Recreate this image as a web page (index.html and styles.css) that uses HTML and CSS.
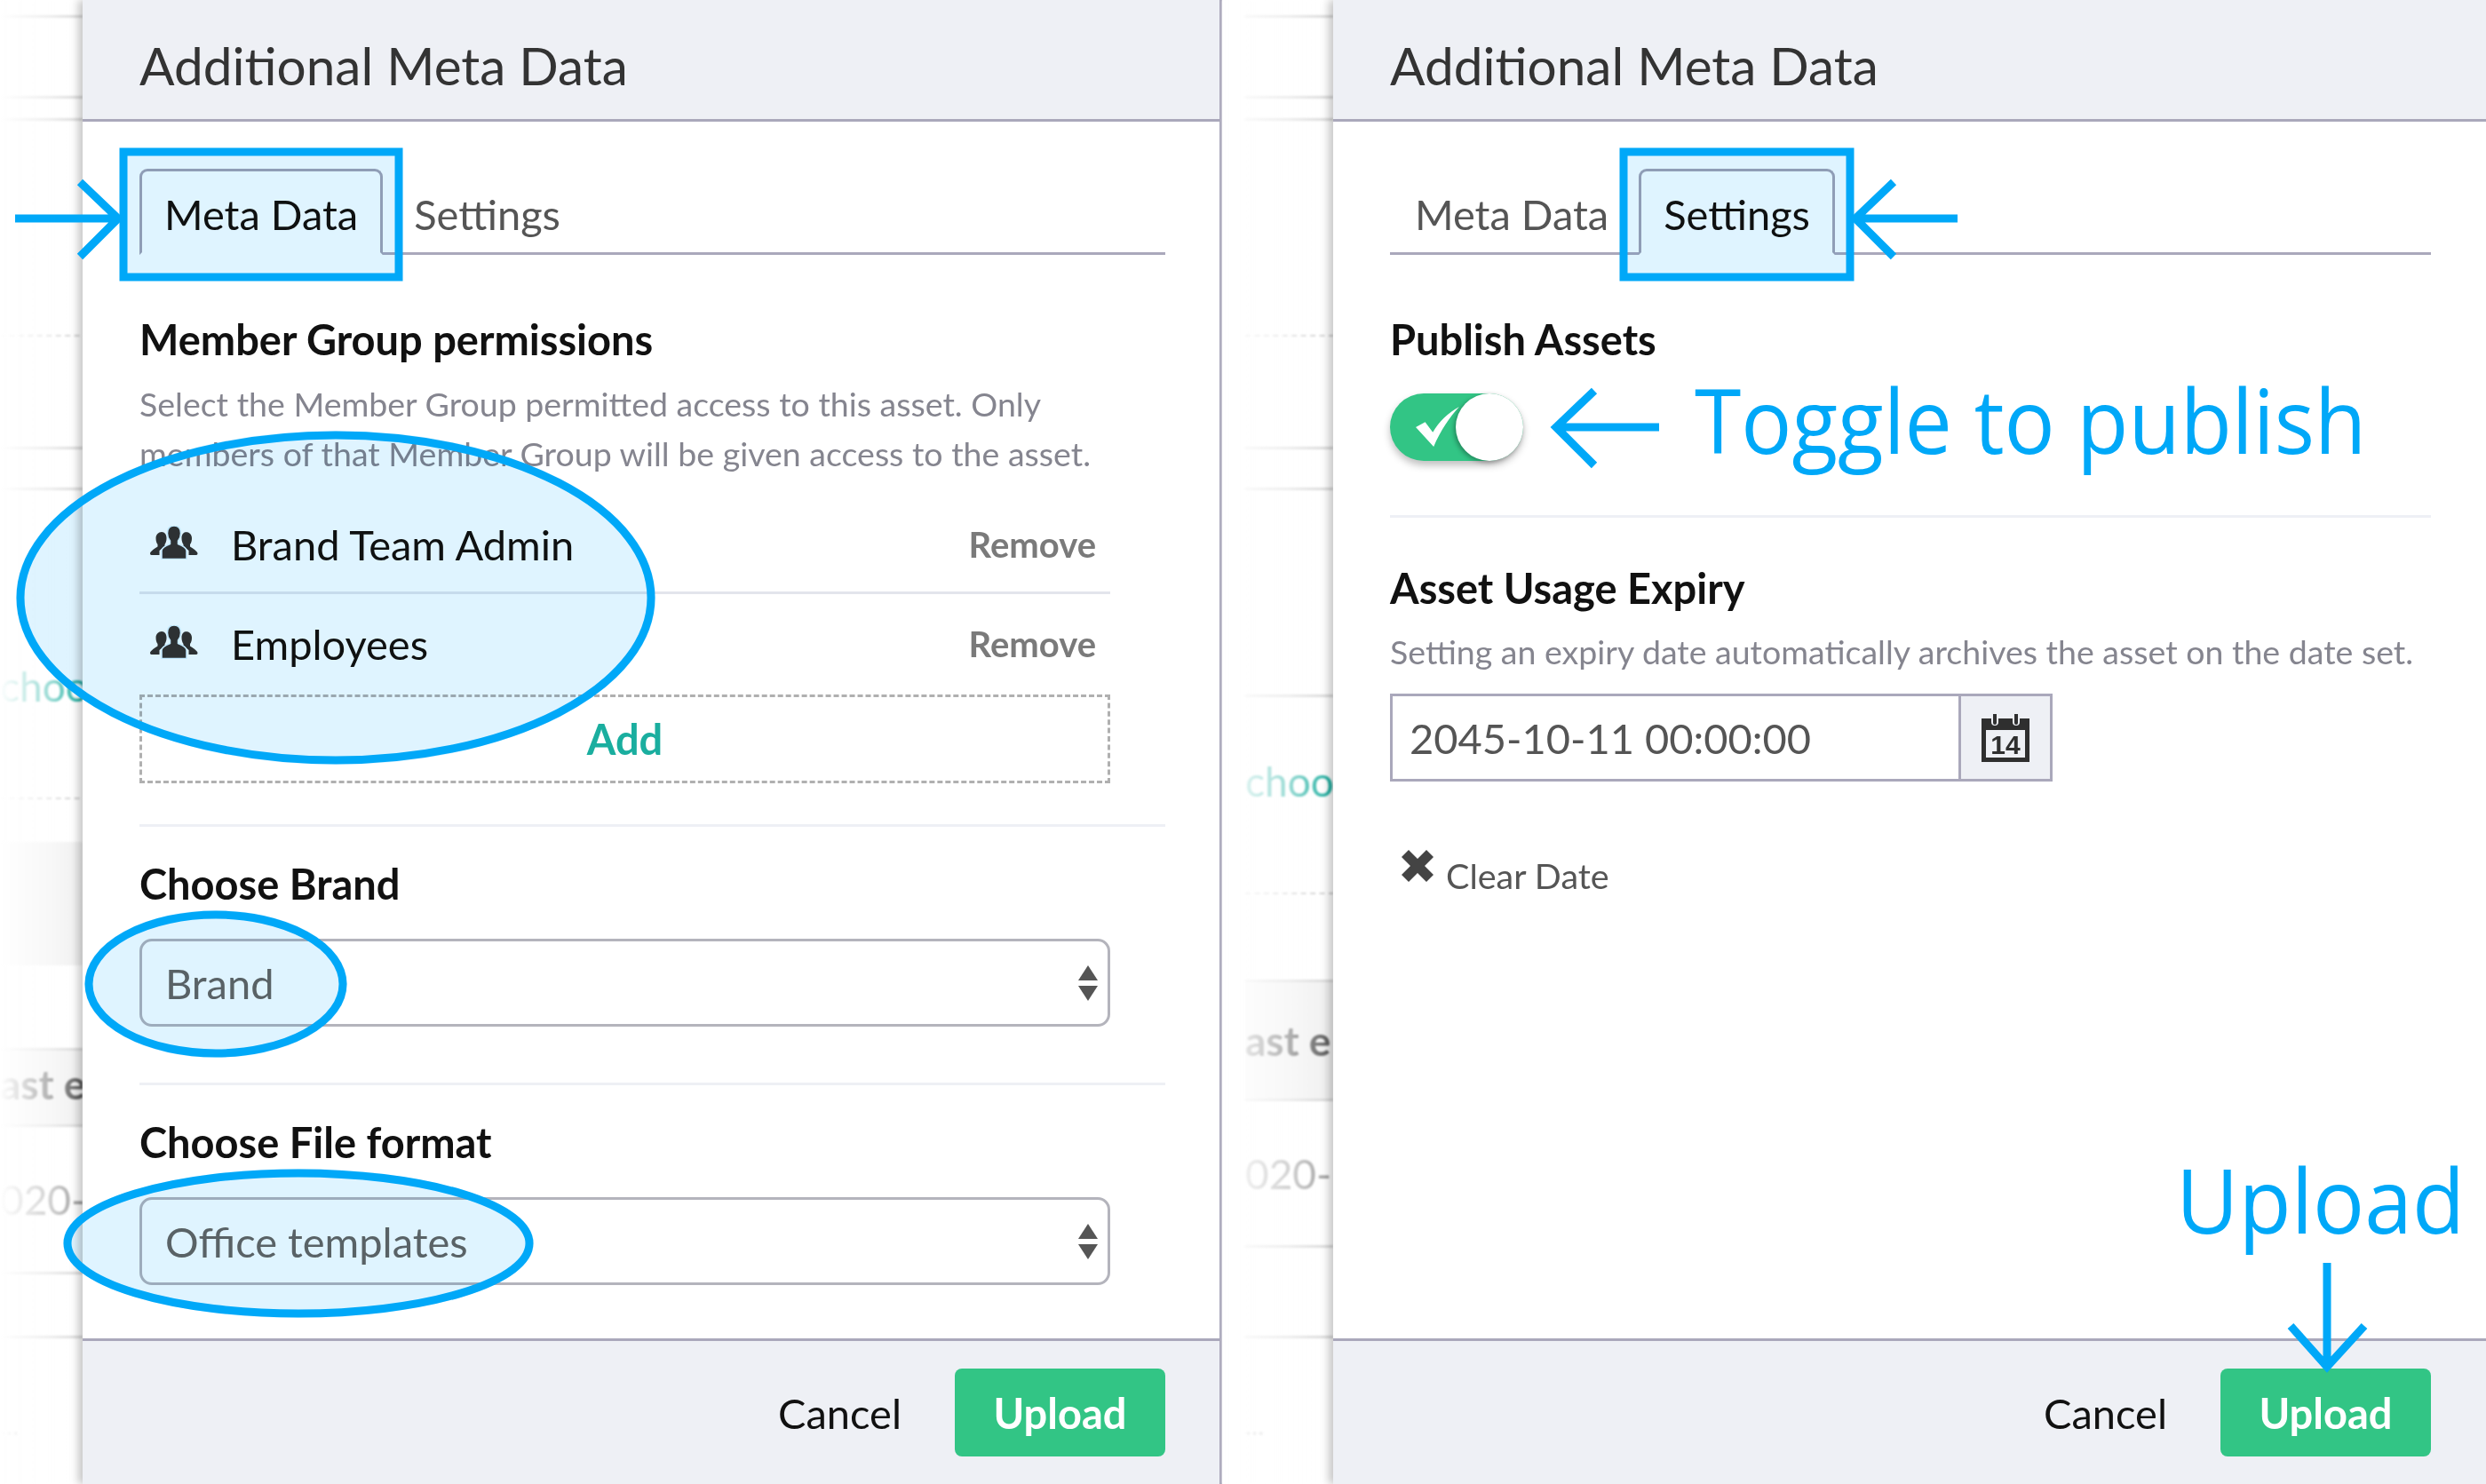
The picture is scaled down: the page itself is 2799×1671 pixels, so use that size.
FILE: index.html
```html
<!DOCTYPE html>
<html lang="en">
<head>
    <meta charset="UTF-8">
    <title>Additional Meta Data</title>
    <link rel="stylesheet" href="styles.css">
</head>
<body>
    <svg width="0" height="0" class="defs">
        <symbol id="people" viewBox="0 0 54 38">
            <path id="people-side" d="M13 7c3.500 0 5.500 3 5.500 7 0 3-.8 5.500-2 7v2l-6 5v5H1.500C.5 33 0 32 0 31c0-2 6-6 8.500-7.500V21c-1.300-1.500-2-4-2-7 0-4 3-7 6.500-7z"/>
            <path d="M41 7c-3.500 0-5.500 3-5.500 7 0 3 .8 5.500 2 7v2l6 5v5h8.500c1 0 1.500-1 1.500-2 0-2-6-6-8.500-7.500V21c1.300-1.500 2-4 2-7 0-4-3-7-6.500-7z"/>
            <path class="people-mid" d="M27 0c5 0 7.500 3.500 7.500 8.500 0 3.500-1.200 6.500-3 8.500v3.500c5 2 9.500 4.500 9.500 7.500v9.500H13V28c0-3 4.500-5.500 9.500-7.500V17c-1.800-2-3-5-3-8.500C19.500 3.500 22 0 27 0z"/>
        </symbol>
    </svg>

    <div class="page">
        <!-- left screen: meta data tab -->
        <section class="screen screen-left">
            <div class="ghost ghost-left">
                <div class="g-line"></div>
                <div class="g-line"></div>
                <div class="g-line"></div>
                <div class="g-dash"></div>
                <div class="g-line"></div>
                <div class="g-line"></div>
                <div></div>
                <div class="g-text g-teal">choo</div>
                <div class="g-dash"></div>
                <div></div>
                <div class="g-block"></div>
                <div class="g-line"></div>
                <div class="g-text g-line g-shade"><b>ast e</b></div>
                <div class="g-text g-line">020-</div>
                <div class="g-line"></div>
                <div class="g-text g-dots">...</div>
            </div>
            <div class="panel panel-left">
                <header class="panel-head">Additional Meta Data</header>
                <div class="panel-body">
                    <nav class="tabs">
                        <span class="tab active">Meta Data</span>
                        <span class="tab">Settings</span>
                    </nav>

                    <h3 class="first">Member Group permissions</h3>
                    <p class="hint hint-two">Select the Member Group permitted access to this asset. Only<br>members of that Member Group will be given access to the asset.</p>

                    <ul class="members">
                        <li><svg class="people"><use href="#people"></use></svg><span class="member-name">Brand Team Admin</span><span class="remove">Remove</span></li>
                        <li><svg class="people"><use href="#people"></use></svg><span class="member-name">Employees</span><span class="remove">Remove</span></li>
                    </ul>
                    <div class="add-box">Add</div>

                    <hr class="rule rule-brand">
                    <h3>Choose Brand</h3>
                    <div class="select">
                        <span>Brand</span>
                        <span class="carets"><i class="up"></i><i class="down"></i></span>
                    </div>

                    <hr class="rule rule-format">
                    <h3>Choose File format</h3>
                    <div class="select">
                        <span>Office templates</span>
                        <span class="carets"><i class="up"></i><i class="down"></i></span>
                    </div>
                </div>
                <footer class="panel-foot">
                    <span class="cancel">Cancel</span>
                    <span class="btn-upload">Upload</span>
                </footer>
            </div>
        </section>

        <!-- right screen: settings tab -->
        <section class="screen screen-right">
            <div class="ghost ghost-right">
                <div class="g-line"></div>
                <div class="g-line"></div>
                <div class="g-line"></div>
                <div class="g-dash"></div>
                <div class="g-line"></div>
                <div class="g-line"></div>
                <div class="g-line"></div>
                <div class="g-text g-teal">choo</div>
                <div class="g-dash"></div>
                <div class="g-line"></div>
                <div class="g-text g-line g-shade"><b>ast e</b></div>
                <div class="g-text g-line">020-</div>
                <div class="g-line"></div>
                <div class="g-text g-dots">...</div>
            </div>
            <div class="panel">
                <header class="panel-head">Additional Meta Data</header>
                <div class="panel-body">
                    <nav class="tabs">
                        <span class="tab">Meta Data</span>
                        <span class="tab active">Settings</span>
                    </nav>

                    <h3 class="first">Publish Assets</h3>
                    <div class="toggle">
                        <svg class="tick" viewBox="0 0 54 48"><path d="M2 24l11-6 9 12C29 18 40 7 53 0 42 12 31 28 23 47z"/></svg>
                        <span class="knob"></span>
                    </div>
                    <hr class="rule rule-publish">

                    <h3>Asset Usage Expiry</h3>
                    <p class="hint hint-one">Setting an expiry date automatically archives the asset on the date set.</p>
                    <div class="date-field">
                        <span class="date-value">2045-10-11 00:00:00</span>
                        <span class="date-btn">
                            <svg class="calendar" viewBox="0 0 54 54">
                                <path d="M0 5h11v4a4 4 0 0 0 8 0V5h16v4a4 4 0 0 0 8 0V5h11v49H0zM5 18v31h44V18z"/>
                                <path d="M13 0h4v10a2 2 0 0 1-4 0zM37 0h4v10a2 2 0 0 1-4 0z"/>
                                <text x="27" y="45" text-anchor="middle">14</text>
                            </svg>
                        </span>
                    </div>
                    <div class="clear-date">
                        <svg class="cross" viewBox="0 0 38 38"><path d="M9 1l10 10L29 1l8 8-10 10 10 10-8 8-10-10L9 37l-8-8 10-10L1 9z"/></svg>
                        <span>Clear Date</span>
                    </div>
                </div>
                <footer class="panel-foot">
                    <span class="cancel">Cancel</span>
                    <span class="btn-upload">Upload</span>
                </footer>
            </div>
        </section>

        <!-- blue annotations drawn over the screenshots -->
        <svg class="marks" width="2799" height="1671" viewBox="0 0 2799 1671">
            <g class="tint">
                <rect x="135" y="167" width="318" height="149"/>
                <rect x="1824" y="167" width="263" height="149"/>
                <ellipse cx="378" cy="673" rx="360" ry="188"/>
                <ellipse cx="243" cy="1108" rx="148" ry="83"/>
                <ellipse cx="336" cy="1400" rx="265" ry="84"/>
            </g>
            <g class="ink">
                <rect x="139" y="171" width="310" height="141"/>
                <rect x="1828" y="171" width="255" height="141"/>
                <ellipse cx="378" cy="673" rx="355" ry="183"/>
                <ellipse cx="243" cy="1108" rx="143" ry="78"/>
                <ellipse cx="336" cy="1400" rx="260" ry="79"/>
                <path d="M17 246H128M90 205L133 246L90 289"/>
                <path d="M2204 246H2093M2132 205L2089 246L2132 289"/>
                <path d="M1868 481H1757M1795 440L1752 481L1795 524"/>
                <path d="M2620 1422V1534M2579 1493L2620 1539L2662 1493"/>
            </g>
        </svg>
        <div class="note note-toggle">Toggle to publish</div>
        <div class="note note-upload">Upload</div>
    </div>
</body>
</html>
```

FILE: styles.css
```css
* {
    box-sizing: border-box;
}

body {
    margin: 0;
    font-family: 'Lato', sans-serif;
    background-color: #fff;
    color: #111;
}

.defs {
    position: absolute;
}

.page {
    position: relative;
    display: flex;
    width: 2799px;
    height: 1671px;
    overflow: hidden;
}

.screen {
    display: flex;
    height: 100%;
}

.screen-left {
    width: 1376px;
}

.screen-right {
    width: 1423px;
}

/* blurred page behind each dialog */
.ghost {
    position: relative;
    display: grid;
    flex: none;
    overflow: hidden;
    color: #9a9a9a;
    font-size: 46px;
    filter: blur(0.8px);
}

.ghost::after {
    content: "";
    position: absolute;
    inset: 0;
    background: linear-gradient(to right, #fff 0, rgba(255, 255, 255, 0.55) 60%, rgba(255, 255, 255, 0) 100%);
}

.ghost-left {
    width: 93px;
    grid-template-rows: 20px 91px 25px 243px 127px 46px 148px 148px 52px 48px 139px 96px 86px 166px 72px 164px;
}

.ghost-right {
    width: 125px;
    padding-left: 26px;
    grid-template-rows: 20px 91px 25px 243px 127px 46px 233px 192px 30px 99px 134px 165px 102px 164px;
}

.g-line {
    border-bottom: 3px solid #d8d8d8;
}

.g-dash {
    border-bottom: 2px dashed #ccc;
}

.g-text {
    display: flex;
    align-items: center;
    white-space: nowrap;
}

.g-teal {
    color: #1aae9f;
    padding-bottom: 4px;
}

.g-shade,
.g-block {
    background-color: #f0f0f0;
}

.ghost-left .g-shade {
    padding-bottom: 8px;
}

.g-shade b {
    color: #555;
}

.g-dots {
    color: #bbb;
    font-size: 30px;
    padding-top: 30px;
}

/* dialog */
.panel {
    position: relative;
    display: flex;
    flex: 1;
    flex-direction: column;
    height: 100%;
    background-color: #fff;
    box-shadow: -5px 0 9px rgba(0, 0, 0, 0.22);
}

.panel-left {
    border-right: 3px solid #aaa8bb;
}

.panel-head {
    display: flex;
    align-items: center;
    flex: none;
    height: 137px;
    padding: 12px 0 0 64px;
    background-color: #eef0f5;
    border-bottom: 3px solid #aaa8bb;
    font-size: 58.5px;
    color: #333;
}

.panel-body {
    flex: 1;
    padding: 0 62px 0 64px;
}

.panel-left .panel-body {
    padding-right: 61px;
}

.tabs {
    display: flex;
    align-items: flex-end;
    height: 150px;
    border-bottom: 3px solid #aaa8bb;
    font-size: 47px;
    color: #555;
}

.tab {
    display: flex;
    align-items: center;
    height: 97px;
    margin-bottom: -3px;
    padding: 4px 25px 0;
    border: 3px solid transparent;
}

.tab.active {
    color: #111;
    background-color: #fff;
    border-color: #a4a4b6;
    border-bottom-color: #fff;
    border-radius: 9px 9px 0 0;
}

.tab.active + .tab {
    padding-left: 32px;
}

.tab + .tab.active {
    margin-left: 6px;
}

h3 {
    margin: 0;
    height: 56px;
    line-height: 56px;
    font-size: 47px;
    font-weight: 700;
    color: #111;
}

h3.first {
    margin-top: 67px;
}

.hint {
    margin: 0;
    font-size: 37.5px;
    line-height: 56px;
    color: #85858f;
}

.hint-two {
    margin-top: 17px;
}

.hint-one {
    margin-top: 16px;
}

.members {
    list-style: none;
    margin: 19px 62px 0 0;
    padding: 0;
}

.members li {
    display: flex;
    align-items: center;
    height: 110px;
    padding: 0 16px 0 12px;
    font-size: 47px;
}

.members li + li {
    height: 112px;
    margin-top: -2px;
    padding-top: 2px;
    border-top: 3px solid #e3e5ec;
}

.people {
    width: 54px;
    height: 38px;
    fill: #333;
    margin-top: -4px;
}

.people-mid {
    stroke: #dff4ff;
    stroke-width: 1.5px;
}

.member-name {
    margin-left: 37px;
    flex: 1;
}

.remove {
    font-size: 40px;
    font-weight: 700;
    color: #7a7a7a;
}

.add-box {
    display: flex;
    align-items: center;
    justify-content: center;
    height: 100px;
    margin: 4px 62px 0 0;
    border: 3px dashed #b0b0b0;
    font-size: 47px;
    font-weight: 700;
    color: #1aae9f;
}

.rule {
    margin: 0;
    border: 0;
    border-top: 3px solid #eef0f5;
}

.rule-brand {
    margin-top: 46px;
    margin-bottom: 36px;
}

.rule-format {
    margin-top: 63px;
    margin-bottom: 36px;
}

.rule-publish {
    margin-top: 61px;
    margin-bottom: 51px;
}

.select {
    display: flex;
    align-items: center;
    justify-content: space-between;
    height: 99px;
    margin: 34px 62px 0 0;
    padding: 0 11px 0 26px;
    border: 3px solid #b4b4bc;
    border-radius: 14px;
    font-size: 47px;
    color: #666;
}

.carets {
    display: flex;
    flex-direction: column;
    gap: 6px;
}

.carets i {
    display: block;
    width: 0;
    height: 0;
    border-left: 11px solid transparent;
    border-right: 11px solid transparent;
}

.carets .up {
    border-bottom: 17px solid #555;
}

.carets .down {
    border-top: 17px solid #555;
}

.toggle {
    position: relative;
    display: flex;
    align-items: center;
    width: 150px;
    height: 76px;
    margin-top: 33px;
    padding-left: 27px;
    background-color: #32c585;
    border-radius: 38px;
    box-shadow: 0 5px 8px rgba(0, 0, 0, 0.25);
}

.tick {
    width: 52px;
    height: 46px;
    fill: #fff;
}

.knob {
    position: absolute;
    right: 0;
    top: 0;
    width: 76px;
    height: 76px;
    background-color: #fff;
    border-radius: 50%;
    box-shadow: -2px 2px 5px rgba(0, 0, 0, 0.3);
}

.date-field {
    display: flex;
    width: 746px;
    height: 99px;
    margin-top: 19px;
    border: 3px solid #aaa8bb;
    font-size: 47px;
    color: #555;
}

.date-value {
    display: flex;
    align-items: center;
    flex: 1;
    padding-left: 19px;
}

.date-btn {
    display: flex;
    align-items: center;
    justify-content: center;
    width: 103px;
    background-color: #eef0f5;
    border-left: 3px solid #aaa8bb;
}

.calendar {
    width: 54px;
    height: 54px;
    fill: #2f2f2f;
}

.calendar text {
    font-family: 'Liberation Sans', sans-serif;
    font-size: 30px;
    font-weight: 700;
}

.clear-date {
    display: flex;
    align-items: flex-end;
    gap: 13px;
    margin: 76px 0 0 12px;
    font-size: 39.5px;
    color: #555;
}

.cross {
    width: 38px;
    height: 38px;
    fill: #444;
    margin-bottom: 15px;
}

.panel-foot {
    display: flex;
    align-items: center;
    justify-content: flex-end;
    flex: none;
    height: 164px;
    padding: 0 62px 0 0;
    background-color: #eef0f5;
    border-top: 3px solid #aaa8bb;
    font-size: 47px;
}

.panel-left .panel-foot {
    padding-right: 61px;
}

.cancel {
    margin-right: 60px;
}

.btn-upload {
    display: flex;
    align-items: center;
    justify-content: center;
    width: 237px;
    height: 99px;
    background-color: #32c585;
    border-radius: 8px;
    font-weight: 700;
    color: #fff;
}

/* annotations */
.marks {
    position: absolute;
    left: 0;
    top: 0;
}

.tint {
    fill: #dff4ff;
    mix-blend-mode: multiply;
}

.ink {
    fill: none;
    stroke: #00a8f8;
    stroke-width: 9px;
}

.note {
    position: absolute;
    font-family: 'Open Sans', sans-serif;
    font-size: 100px;
    line-height: 140px;
    color: #00a8f8;
    white-space: nowrap;
    transform-origin: left center;
}

.note-toggle {
    left: 1908px;
    top: 402px;
    transform: scaleX(0.95);
}

.note-upload {
    left: 2450px;
    top: 1280px;
    transform: scaleX(0.967);
}
```
